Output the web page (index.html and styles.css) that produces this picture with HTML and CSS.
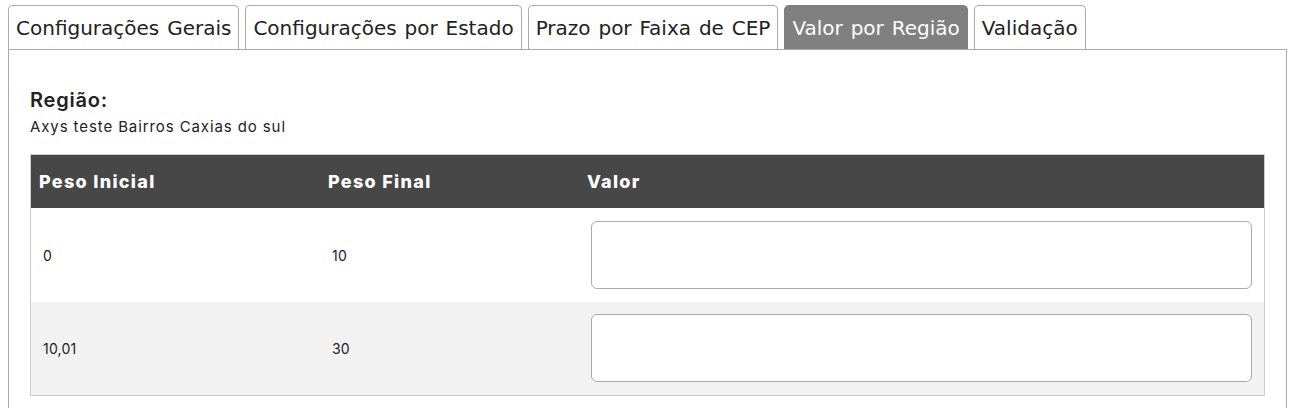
FILE: index.html
```html
<!DOCTYPE html>
<html lang="pt-BR">
  <head>
    <meta charset="UTF-8" />
    <meta name="viewport" content="width=device-width, initial-scale=1.0" />
    <title>Valor por Região</title>
    <link rel="stylesheet" href="styles.css">
  </head>
  <body>
    <ul class="tabs">
      <li class="tab">Configurações Gerais</li>
      <li class="tab">Configurações por Estado</li>
      <li class="tab">Prazo por Faixa de CEP</li>
      <li class="tab active">Valor por Região</li>
      <li class="tab">Validação</li>
    </ul>
    <div class="panel">
      <h3 class="region-title">Região:</h3>
      <p class="region-name">Axys teste Bairros Caxias do sul</p>
      <table class="price-table">
        <thead>
          <tr>
            <th class="col-start">Peso Inicial</th>
            <th class="col-end">Peso Final</th>
            <th>Valor</th>
          </tr>
        </thead>
        <tbody>
          <tr>
            <td>0</td>
            <td>10</td>
            <td><input type="text" class="value-input" /></td>
          </tr>
          <tr>
            <td>10,01</td>
            <td>30</td>
            <td><input type="text" class="value-input" /></td>
          </tr>
        </tbody>
      </table>
    </div>
  </body>
</html>
```

FILE: styles.css
```css
/* CSS styles */
body {
  margin: 0;
  padding: 5px 6px 0 8px;
  background-color: #fff;
  font-family: "DejaVu Sans", Verdana, sans-serif;
  color: #222;
}

.tabs {
  display: flex;
  gap: 6px;
  margin: 0;
  padding: 0;
  list-style: none;
}

.tab {
  height: 43px;
  padding: 0 7px 0 7px;
  border: 1px solid #aaa;
  border-bottom: none;
  border-radius: 5px 5px 0 0;
  font-size: 20px;
  line-height: 45px;
  word-spacing: 1.5px;
  color: #222;
  white-space: nowrap;
}

.tab.active {
  background-color: #808080;
  border-color: #808080;
  color: #fff;
}

.panel {
  border: 1px solid #aaa;
  padding: 36px 21px 30px 21px;
  font-family: Inter, "Open Sans", sans-serif;
}

.region-title {
  margin: 0;
  font-size: 20px;
  font-weight: 600;
  letter-spacing: 0.8px;
  line-height: 28px;
  color: #222;
}

.region-name {
  margin: 3px 0 17px 0;
  font-size: 15px;
  letter-spacing: 0.9px;
  line-height: 20px;
  color: #222;
}

.price-table {
  width: 100%;
  border-collapse: collapse;
  border: 1px solid #ccc;
}

.price-table th {
  background-color: #474747;
  color: #fff;
  text-align: left;
  font-size: 18px;
  font-weight: 800;
  letter-spacing: 1.3px;
  height: 53px;
  padding: 0 8px;
}

.price-table .col-start {
  width: 273px;
}

.price-table .col-end {
  width: 243px;
}

.price-table td {
  padding: 13px 12px;
  font-size: 14px;
  letter-spacing: 0.2px;
  color: #222;
}

.price-table tbody tr:nth-child(2) td {
  padding-top: 12px;
  background-color: #f2f2f2;
}

.value-input {
  display: block;
  box-sizing: border-box;
  width: 100%;
  height: 68px;
  border: 1px solid #aaa;
  border-radius: 6px;
  background-color: #fff;
}
```
